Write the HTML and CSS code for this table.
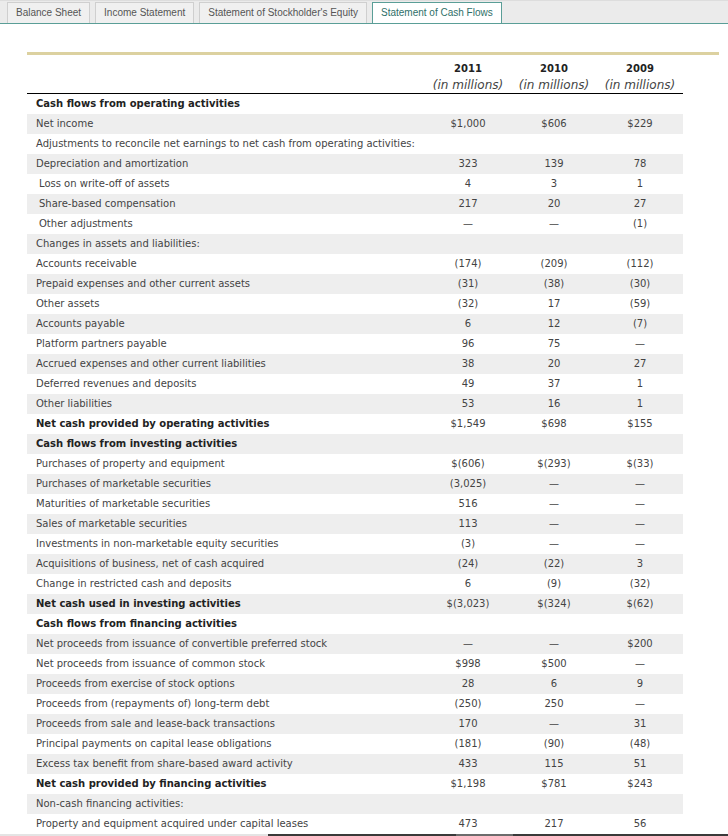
FILE: index.html
```html
<!DOCTYPE html>
<html>
<head>
<meta charset="utf-8">
<link rel="stylesheet" href="styles.css">
</head>
<body>
<div class="tabbar">
  <div class="tab">Balance Sheet</div>
  <div class="tab">Income Statement</div>
  <div class="tab">Statement of Stockholder's Equity</div>
  <div class="tab active">Statement of Cash Flows</div>
</div>
<div class="content">
  <div class="gold"></div>
  <table class="cf">
    <thead>
      <tr>
        <th class="lbl"></th>
        <th><div class="yr">2011</div><div class="unit">(in millions)</div></th>
        <th><div class="yr">2010</div><div class="unit">(in millions)</div></th>
        <th><div class="yr">2009</div><div class="unit">(in millions)</div></th>
      </tr>
    </thead>
    <tbody>
      <tr class="b"><td class="lbl">Cash flows from operating activities</td><td></td><td></td><td></td></tr>
      <tr><td class="lbl">Net income</td><td>$1,000</td><td>$606</td><td>$229</td></tr>
      <tr><td class="lbl">Adjustments to reconcile net earnings to net cash from operating activities:</td><td></td><td></td><td></td></tr>
      <tr><td class="lbl">Depreciation and amortization</td><td>323</td><td>139</td><td>78</td></tr>
      <tr><td class="lbl ind">Loss on write-off of assets</td><td>4</td><td>3</td><td>1</td></tr>
      <tr><td class="lbl ind">Share-based compensation</td><td>217</td><td>20</td><td>27</td></tr>
      <tr><td class="lbl ind">Other adjustments</td><td>—</td><td>—</td><td>(1)</td></tr>
      <tr><td class="lbl">Changes in assets and liabilities:</td><td></td><td></td><td></td></tr>
      <tr><td class="lbl">Accounts receivable</td><td>(174)</td><td>(209)</td><td>(112)</td></tr>
      <tr><td class="lbl">Prepaid expenses and other current assets</td><td>(31)</td><td>(38)</td><td>(30)</td></tr>
      <tr><td class="lbl">Other assets</td><td>(32)</td><td>17</td><td>(59)</td></tr>
      <tr><td class="lbl">Accounts payable</td><td>6</td><td>12</td><td>(7)</td></tr>
      <tr><td class="lbl">Platform partners payable</td><td>96</td><td>75</td><td>—</td></tr>
      <tr><td class="lbl">Accrued expenses and other current liabilities</td><td>38</td><td>20</td><td>27</td></tr>
      <tr><td class="lbl">Deferred revenues and deposits</td><td>49</td><td>37</td><td>1</td></tr>
      <tr><td class="lbl">Other liabilities</td><td>53</td><td>16</td><td>1</td></tr>
      <tr class="b"><td class="lbl">Net cash provided by operating activities</td><td>$1,549</td><td>$698</td><td>$155</td></tr>
      <tr class="b"><td class="lbl">Cash flows from investing activities</td><td></td><td></td><td></td></tr>
      <tr><td class="lbl">Purchases of property and equipment</td><td>$(606)</td><td>$(293)</td><td>$(33)</td></tr>
      <tr><td class="lbl">Purchases of marketable securities</td><td>(3,025)</td><td>—</td><td>—</td></tr>
      <tr><td class="lbl">Maturities of marketable securities</td><td>516</td><td>—</td><td>—</td></tr>
      <tr><td class="lbl">Sales of marketable securities</td><td>113</td><td>—</td><td>—</td></tr>
      <tr><td class="lbl">Investments in non-marketable equity securities</td><td>(3)</td><td>—</td><td>—</td></tr>
      <tr><td class="lbl">Acquisitions of business, net of cash acquired</td><td>(24)</td><td>(22)</td><td>3</td></tr>
      <tr><td class="lbl">Change in restricted cash and deposits</td><td>6</td><td>(9)</td><td>(32)</td></tr>
      <tr class="b"><td class="lbl">Net cash used in investing activities</td><td>$(3,023)</td><td>$(324)</td><td>$(62)</td></tr>
      <tr class="b"><td class="lbl">Cash flows from financing activities</td><td></td><td></td><td></td></tr>
      <tr><td class="lbl">Net proceeds from issuance of convertible preferred stock</td><td>—</td><td>—</td><td>$200</td></tr>
      <tr><td class="lbl">Net proceeds from issuance of common stock</td><td>$998</td><td>$500</td><td>—</td></tr>
      <tr><td class="lbl">Proceeds from exercise of stock options</td><td>28</td><td>6</td><td>9</td></tr>
      <tr><td class="lbl">Proceeds from (repayments of) long-term debt</td><td>(250)</td><td>250</td><td>—</td></tr>
      <tr><td class="lbl">Proceeds from sale and lease-back transactions</td><td>170</td><td>—</td><td>31</td></tr>
      <tr><td class="lbl">Principal payments on capital lease obligations</td><td>(181)</td><td>(90)</td><td>(48)</td></tr>
      <tr><td class="lbl">Excess tax benefit from share-based award activity</td><td>433</td><td>115</td><td>51</td></tr>
      <tr class="b"><td class="lbl">Net cash provided by financing activities</td><td>$1,198</td><td>$781</td><td>$243</td></tr>
      <tr><td class="lbl">Non-cash financing activities:</td><td></td><td></td><td></td></tr>
      <tr><td class="lbl">Property and equipment acquired under capital leases</td><td>473</td><td>217</td><td>56</td></tr>
    </tbody>
  </table>
</div>
<div class="strip"><span class="s1"></span><span class="s2"></span><span class="s3"></span><span class="s4"></span></div>
</body>
</html>
```
FILE: styles.css
```css
html, body {
  margin: 0;
  padding: 0;
  background: #ffffff;
}
body {
  width: 728px;
  height: 836px;
  overflow: hidden;
  font-family: "DejaVu Sans", Verdana, sans-serif;
}
.tabbar {
  display: flex;
  align-items: flex-end;
  gap: 5px;
  height: 22px;
  padding: 0 0 0 7px;
  background: #ebebeb;
  border-top: 1px solid #dddddd;
  border-bottom: 1px solid #5a9e97;
}
.tab {
  height: 20px;
  line-height: 20px;
  padding: 0 8px;
  font-family: "Liberation Sans", Arial, sans-serif;
  font-size: 10px;
  color: #555555;
  background: #f0f0f0;
  border: 1px solid #cfcfcf;
  border-bottom: none;
}
.tab.active {
  background: #ffffff;
  color: #2f6f69;
  border-color: #5a9e97;
}
.content {
  margin-top: 28px;
  padding-left: 27px;
}
.gold {
  width: 692px;
  height: 3px;
  background: #dcd1a0;
}
.cf {
  width: 656px;
  border-collapse: collapse;
  table-layout: fixed;
  font-size: 10px;
  color: #444444;
}
.cf th {
  width: 86px;
  padding: 6px 0 0 0;
  font-weight: normal;
  text-align: center;
  vertical-align: top;
  border-bottom: 1px solid #000000;
  height: 31px;
}
.cf th.lbl {
  width: auto;
}
.yr {
  font-weight: bold;
  color: #222222;
  line-height: 16px;
  font-size: 10px;
}
.unit {
  font-style: italic;
  color: #444444;
  line-height: 16px;
  font-size: 12px;
}
.cf td {
  height: 20px;
  padding: 0;
  line-height: 20px;
  text-align: center;
  white-space: nowrap;
}
.cf td.lbl {
  text-align: left;
  padding-left: 9px;
  color: #444444;
}
.cf td.ind {
  padding-left: 12px;
}
.cf tbody tr:nth-child(even) td {
  background: #eeeeee;
}
.cf tr.b td.lbl {
  font-weight: bold;
  color: #222222;
}
.strip {
  display: flex;
  height: 3px;
}
.strip span {
  display: block;
  height: 3px;
}
.s1 { width: 268px; background: #e4e4e4; }
.s2 { width: 188px; background: #3a3a3a; }
.s3 { width: 57px; background: #6c6c6c; }
.s4 { flex: 1; background: #3a3a3a; }
```
